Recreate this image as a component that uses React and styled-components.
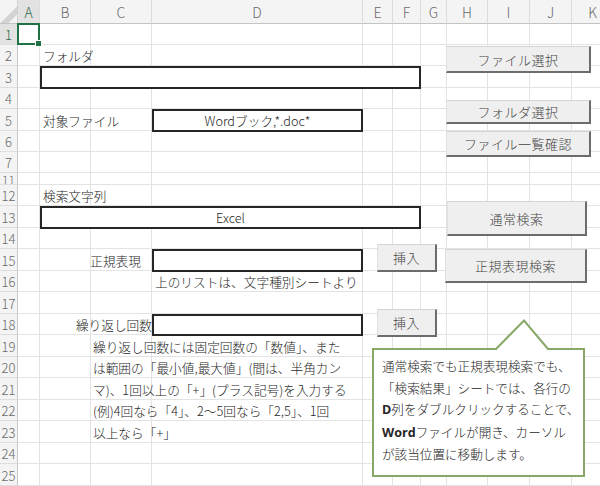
import React from "react";
import styled, { createGlobalStyle } from "styled-components";

const GlobalStyle = createGlobalStyle`
  html, body {
    margin: 0;
    padding: 0;
    background: #fff;
  }
  body {
    font-family: "Noto Sans CJK JP", "Noto Sans", sans-serif;
  }
`;

// column widths: row header, A..K
const COLS = [18, 22, 51, 61, 211, 30, 28, 26, 41, 42, 42, 42];
const COL_NAMES = ["A", "B", "C", "D", "E", "F", "G", "H", "I", "J", "K"];

// [excel row number, height]
const ROWS = [
  [1, 21], [2, 21], [3, 22], [4, 21], [5, 22], [6, 21], [7, 21], [11, 12],
  [12, 21], [13, 22], [14, 21], [15, 22], [16, 21], [17, 22], [18, 21],
  [19, 22], [20, 21], [21, 22], [22, 21], [23, 22], [24, 21], [25, 22],
];

// excel row -> grid row line
const gr = (r) => ROWS.findIndex(([n]) => n === r) + 2;
// excel column letter -> grid column line
const gc = (c) => COL_NAMES.indexOf(c) + 2;

const Sheet = styled.div`
  position: relative;
  width: 600px;
  height: 486px;
  overflow: hidden;
  display: grid;
  grid-template-columns: ${COLS.map((w) => `${w}px`).join(" ")};
  grid-template-rows: 24px ${ROWS.map(([, h]) => `${h}px`).join(" ")};
  background: #fff;
`;

const Corner = styled.div`
  grid-row: 1;
  grid-column: 1;
  background: linear-gradient(135deg, #f3f3f3 58%, #d4d4d4 58%, #d4d4d4 80%, #f3f3f3 80%);
  border-right: 1px solid #d0d0d0;
  border-bottom: 1px solid #c4c4c4;
  box-sizing: border-box;
`;

const ColHead = styled.div`
  grid-row: 1;
  grid-column: ${(p) => p.$col};
  display: flex;
  align-items: center;
  justify-content: center;
  background: ${(p) => (p.$active ? "#e2e2e2" : "#f4f4f4")};
  color: ${(p) => (p.$active ? "#2f6a47" : "#6a6a6a")};
  border-right: 1px solid #dcdcdc;
  border-bottom: 1px solid #c4c4c4;
  box-sizing: border-box;
  font-size: 14px;
  font-weight: 300;
  padding-top: 1px;
`;

const RowHead = styled.div`
  grid-row: ${(p) => p.$row};
  grid-column: 1;
  display: flex;
  align-items: center;
  justify-content: center;
  overflow: hidden;
  background: ${(p) => (p.$active ? "#e2e2e2" : "#f4f4f4")};
  color: ${(p) => (p.$active ? "#2f6a47" : "#6a6a6a")};
  border-right: 1px solid #c8c8c8;
  border-bottom: 1px solid #dedede;
  box-sizing: border-box;
  font-size: ${(p) => (p.$short ? "12px" : "13px")};
  font-weight: 300;
  line-height: ${(p) => (p.$short ? "11px" : "normal")};
  padding-top: 1px;
`;

const Cell = styled.div`
  grid-row: ${(p) => p.$row};
  grid-column: ${(p) => p.$col};
  border-right: 1px solid #e3e3e3;
  border-bottom: 1px solid #e3e3e3;
  box-sizing: border-box;
`;

const Text = styled.div`
  grid-row: ${(p) => p.$row};
  grid-column: ${(p) => p.$col};
  display: flex;
  align-items: center;
  justify-content: ${(p) => (p.$right ? "flex-end" : "flex-start")};
  padding: ${(p) => (p.$right ? `0 ${p.$pad ?? 1}px 0 0` : `0 0 0 ${p.$pad ?? 3}px`)};
  white-space: nowrap;
  font-size: 12.7px;
  font-weight: 300;
  color: #262626;
  z-index: 1;
`;

const Box = styled.div`
  grid-row: ${(p) => p.$row};
  grid-column: ${(p) => p.$col};
  display: flex;
  align-items: center;
  justify-content: center;
  border: 2px solid #262626;
  box-sizing: border-box;
  margin: 0 0 -1px 0;
  background: #fff;
  font-size: 12.7px;
  font-weight: 300;
  color: #262626;
  white-space: nowrap;
  z-index: 1;
`;

const Selection = styled.div`
  grid-row: ${gr(1)};
  grid-column: ${gc("A")};
  position: relative;
  margin: -1px 0 0 -1px;
  border: 2px solid #1f7244;
  z-index: 2;

  &::after {
    content: "";
    position: absolute;
    right: -4px;
    bottom: -4px;
    width: 5px;
    height: 5px;
    background: #1f7244;
    border: 1px solid #fff;
  }
`;

const FormButton = styled.button`
  position: absolute;
  left: ${(p) => p.$x}px;
  top: ${(p) => p.$y}px;
  width: ${(p) => p.$w}px;
  height: ${(p) => p.$h}px;
  box-sizing: border-box;
  padding: 0;
  margin: 0;
  background: #efefef;
  border-top: 1px solid #d4d4d4;
  border-left: 1px solid #e0e0e0;
  border-right: 2px solid #6c6c6c;
  border-bottom: 2px solid #6c6c6c;
  font-family: "Noto Sans CJK JP", sans-serif;
  font-size: 13px;
  font-weight: 300;
  color: #454545;
  letter-spacing: 0.5px;
  z-index: 3;
`;

const Callout = styled.div`
  position: absolute;
  left: 372px;
  top: 319px;
  width: 213px;
  height: 158px;
  z-index: 3;
`;

const CalloutShape = styled.svg`
  position: absolute;
  inset: 0;
`;

const CalloutText = styled.div`
  position: relative;
  padding: 36px 0 0 10px;
  font-size: 12.6px;
  font-weight: 300;
  line-height: 21.6px;
  color: #262626;
  white-space: nowrap;
`;

const Latin = styled.span`
  font-weight: 700;
  font-family: "Open Sans", "Noto Sans", sans-serif;
`;

const noteLines = [
  "繰り返し回数には固定回数の「数値」、また",
  "は範囲の「最小値,最大値」(間は、半角カン",
  "マ)、1回以上の「+」(プラス記号)を入力する",
  "(例)4回なら「4」、2〜5回なら「2,5」、1回",
  "以上なら「+」",
];

const buttons = [
  { label: "ファイル選択", x: 446, y: 46, w: 145, h: 27 },
  { label: "フォルダ選択", x: 446, y: 100, w: 145, h: 24 },
  { label: "ファイル一覧確認", x: 446, y: 131, w: 145, h: 26 },
  { label: "通常検索", x: 447, y: 201, w: 140, h: 35 },
  { label: "正規表現検索", x: 445, y: 249, w: 142, h: 34 },
  { label: "挿入", x: 377, y: 244, w: 60, h: 28 },
  { label: "挿入", x: 377, y: 309, w: 60, h: 28 },
];

export default function App() {
  return (
    <>
      <GlobalStyle />
      <Sheet>
        <Corner />
        {COL_NAMES.map((c) => (
          <ColHead key={c} $col={gc(c)} $active={c === "A"}>
            {c}
          </ColHead>
        ))}
        {ROWS.map(([n, h]) => (
          <RowHead key={n} $row={gr(n)} $short={h < 20} $active={n === 1}>
            {n}
          </RowHead>
        ))}
        {ROWS.map(([n]) =>
          COL_NAMES.map((c) => <Cell key={`${n}${c}`} $row={gr(n)} $col={gc(c)} />)
        )}

        <Selection />

        <Text $row={gr(2)} $col={gc("B")}>フォルダ</Text>
        <Box $row={gr(3)} $col={`${gc("B")} / ${gc("G")}`} />

        <Text $row={gr(5)} $col={gc("B")}>対象ファイル</Text>
        <Box $row={gr(5)} $col={gc("D")}>Wordブック,*.doc*</Box>

        <Text $row={gr(12)} $col={gc("B")}>検索文字列</Text>
        <Box $row={gr(13)} $col={`${gc("B")} / ${gc("G")}`}>Excel</Box>

        <Text $row={gr(15)} $col={`${gc("B")} / ${gc("D")}`} $right $pad={11}>
          正規表現
        </Text>
        <Box $row={gr(15)} $col={gc("D")} />
        <Text $row={gr(16)} $col={gc("D")}>上のリストは、文字種別シートより</Text>

        <Text $row={gr(18)} $col={`${gc("B")} / ${gc("D")}`} $right $pad={0}>
          繰り返し回数
        </Text>
        <Box $row={gr(18)} $col={gc("D")} />

        {noteLines.map((line, i) => (
          <Text key={i} $row={gr(19 + i)} $col={`${gc("C")} / ${gc("E")}`} $pad={2}>
            {line}
          </Text>
        ))}

        {buttons.map((b, i) => (
          <FormButton key={i} $x={b.x} $y={b.y} $w={b.w} $h={b.h}>
            {b.label}
          </FormButton>
        ))}

        <Callout>
          <CalloutShape width="213" height="158" viewBox="0 0 213 158">
            <path
              d="M1 30 L124 30 L152 1.5 L176 30 L212 30 L212 157 L1 157 Z"
              fill="#fff"
              stroke="#87a866"
              strokeWidth="2"
              strokeLinejoin="miter"
            />
          </CalloutShape>
          <CalloutText>
            <div>通常検索でも正規表現検索でも、</div>
            <div>「検索結果」シートでは、各行の</div>
            <div>
              <Latin>D</Latin>列をダブルクリックすることで、
            </div>
            <div>
              <Latin>Word</Latin>ファイルが開き、カーソル
            </div>
            <div>が該当位置に移動します。</div>
          </CalloutText>
        </Callout>
      </Sheet>
    </>
  );
}
